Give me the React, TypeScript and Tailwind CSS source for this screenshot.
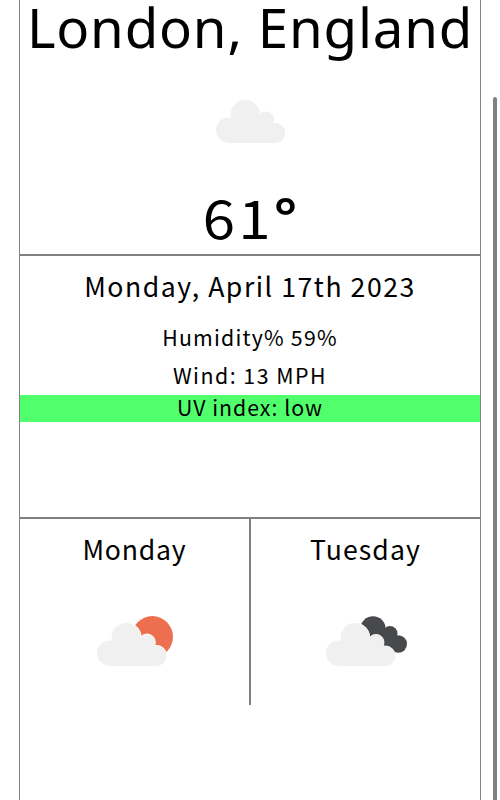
import type { ReactNode } from "react";

function CloudShape() {
  return (
    <>
      <circle cx="12.6" cy="30.2" r="12.6" />
      <circle cx="29.2" cy="14.6" r="14.6" />
      <circle cx="50" cy="19.4" r="8" />
      <circle cx="59.2" cy="33" r="10.1" />
      <path d="M12 18h34v4l13 4v17.1H12z" />
    </>
  );
}

function Icon({ kind }: { kind: "cloud" | "sun" | "dark" }) {
  if (kind === "cloud") {
    return (
      <svg className="ml-[196px] h-[44px] w-[72px] fill-[#f0f0f0]" viewBox="0 0 72 44">
        <g transform="translate(0.1 0)"><CloudShape /></g>
      </svg>
    );
  }
  return (
    <svg className={kind === "sun" ? "ml-[77px] h-[52px] w-[84px]" : "ml-[75px] h-[52px] w-[84px]"} viewBox="0 0 84 52">
      {kind === "sun" ? (
        <circle cx="55.3" cy="20.8" r="20.7" fill="#ec7050" />
      ) : (
        <g fill="#48494b">
          <circle cx="47" cy="13" r="12.7" />
          <circle cx="64" cy="17.5" r="7.5" />
          <circle cx="72.3" cy="28" r="8.7" />
          <path d="M45 14l18-1 9 23H58z" />
        </g>
      )}
      <g transform="translate(0 7)">
        <g fill="#fff" stroke="#fff" strokeWidth={kind === "sun" ? 1.6 : 0.8}><CloudShape /></g>
        <g fill="#f0f0f0"><CloudShape /></g>
      </g>
    </svg>
  );
}

function Line({ className, children }: { className: string; children: ReactNode }) {
  return <div className={`text-center whitespace-nowrap ${className}`}>{children}</div>;
}

export default function App() {
  return (
    <div className="flex h-[800px] w-[500px] overflow-hidden bg-white pl-[19px] font-['Noto_Sans_CJK_SC','Noto_Sans',sans-serif] text-black">
      <main className="flex w-[462px] shrink-0 flex-col border-x border-[#858585]">
        <section className="flex h-[256px] shrink-0 flex-col border-b-2 border-[#808080]">
          <Line className="h-[49px] font-['Noto_Sans',sans-serif] text-[54.6px] leading-[54px] tracking-[0.8px]">London, England</Line>
          <div className="mt-[51px] h-[44px]"><Icon kind="cloud" /></div>
          <Line className="mt-[48px] h-[48px] scale-x-[1.1] text-[53px] leading-[48px] tracking-[2.8px]">61<span className="font-bold tracking-[0px]">°</span></Line>
        </section>
        <section className="flex h-[263px] shrink-0 flex-col border-b-2 border-[#808080]">
          <Line className="mt-[17px] h-[26px] text-[26.6px] leading-[26px] tracking-[1.55px]">Monday, April 17th 2023</Line>
          <Line className="mt-[25px] h-[26px] text-[21.3px] leading-[26px] tracking-[1.2px]">Humidity% 59%</Line>
          <Line className="mt-[12px] h-[26px] text-[21.3px] leading-[26px] tracking-[1.5px]">Wind: 13 MPH</Line>
          <Line className="mt-[7px] h-[27px] bg-[#51ff6d] text-[21.3px] leading-[24px] tracking-[1px]">UV index: low</Line>
        </section>
        <section className="grid h-[186px] shrink-0 grid-cols-2">
          <div className="border-r border-[#808080]">
            <Line className="mt-[17px] h-[26px] text-[26.6px] leading-[26px] tracking-[0.8px]">Monday</Line>
            <div className="mt-[54px]"><Icon kind="sun" /></div>
          </div>
          <div className="border-l border-[#808080]">
            <Line className="mt-[17px] h-[26px] text-[26.6px] leading-[26px] tracking-[1.1px]">Tuesday</Line>
            <div className="mt-[54px]"><Icon kind="dark" /></div>
          </div>
        </section>
      </main>
      <div className="mt-[97px] ml-[12px] w-[4px] shrink-0 rounded-t bg-[#808080]" />
    </div>
  );
}
